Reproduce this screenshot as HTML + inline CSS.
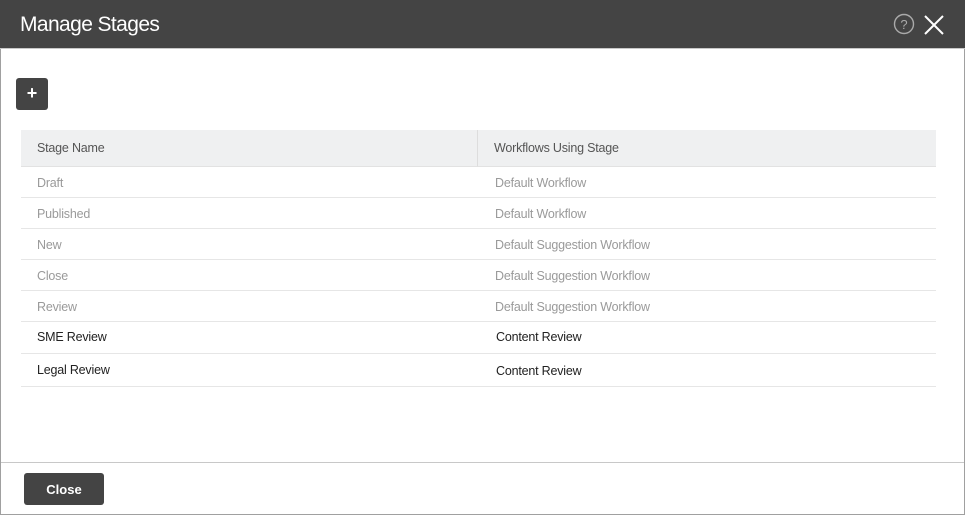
<!DOCTYPE html>
<html><head><style>
*{margin:0;padding:0;box-sizing:border-box}
body{width:965px;height:515px;overflow:hidden;background:#fff;font-family:"Liberation Sans",sans-serif;position:relative}
.frame{position:absolute;left:0;top:0;width:965px;height:515px;border:1px solid #a0a0a0}
.hdr{position:absolute;left:0;top:0;width:965px;height:49px;background:#444;border-bottom:1px solid #c8c8c8}
.title{position:absolute;left:20px;top:13px;color:#fff;font-size:21px;letter-spacing:-0.6px}
.plus{position:absolute;left:16px;top:78px;width:32px;height:32px;background:#444;border-radius:3px;color:#fff;font-size:18px;font-weight:bold;text-align:center;line-height:31px}
.th{position:absolute;top:130px;height:37px;background:#eff0f1;border-bottom:1px solid #e2e2e2;font-size:12.5px;color:#555;line-height:37px;padding-left:16px;letter-spacing:-0.2px}
.row{position:absolute;left:21px;width:915px;border-bottom:1px solid #e6e6e6;font-size:12.5px;letter-spacing:-0.2px}
.row span{position:absolute;top:0}
.g{color:#9a9a9a}.b{color:#222}
.foot{position:absolute;left:1px;top:462px;width:963px;border-top:1px solid #c8c8c8}
.close{position:absolute;left:24px;top:473px;width:80px;height:32px;background:#444;border-radius:3px;color:#fff;font-weight:bold;font-size:13px;text-align:center;line-height:33px}
</style></head><body>
<div class="frame"></div>
<div class="hdr"><div class="title">Manage Stages</div>
<svg style="position:absolute;left:893px;top:13px" width="22" height="22" viewBox="0 0 22 22"><circle cx="11" cy="11" r="9.5" fill="none" stroke="#aaa" stroke-width="1.4"/><text x="11" y="16" text-anchor="middle" font-size="13" fill="#aaa" font-family="Liberation Sans">?</text></svg>
<svg style="position:absolute;left:923px;top:14px" width="22" height="22" viewBox="0 0 22 22"><path d="M2 2L20 20M20 2L2 20" stroke="#fff" stroke-width="2"/></svg>
</div>
<div class="plus">+</div>
<div class="th" style="left:21px;width:457px;border-right:1px solid #ddd">Stage Name</div>
<div class="th" style="left:478px;width:458px">Workflows Using Stage</div>
<div class="row g" style="top:167px;height:31px"><span style="left:16px;top:9px">Draft</span><span style="left:474px;top:9px">Default Workflow</span></div>
<div class="row g" style="top:198px;height:31px"><span style="left:16px;top:9px">Published</span><span style="left:474px;top:9px">Default Workflow</span></div>
<div class="row g" style="top:229px;height:31px"><span style="left:16px;top:9px">New</span><span style="left:474px;top:9px">Default Suggestion Workflow</span></div>
<div class="row g" style="top:260px;height:31px"><span style="left:16px;top:9px">Close</span><span style="left:474px;top:9px">Default Suggestion Workflow</span></div>
<div class="row g" style="top:291px;height:31px"><span style="left:16px;top:9px">Review</span><span style="left:474px;top:9px">Default Suggestion Workflow</span></div>
<div class="row b" style="top:322px;height:32px"><span style="left:16px;top:8px">SME Review</span><span style="left:475px;top:8px">Content Review</span></div>
<div class="row b" style="top:354px;height:33px"><span style="left:16px;top:9px">Legal Review</span><span style="left:475px;top:10px">Content Review</span></div>
<div class="foot"></div>
<div class="close">Close</div>
</body></html>
